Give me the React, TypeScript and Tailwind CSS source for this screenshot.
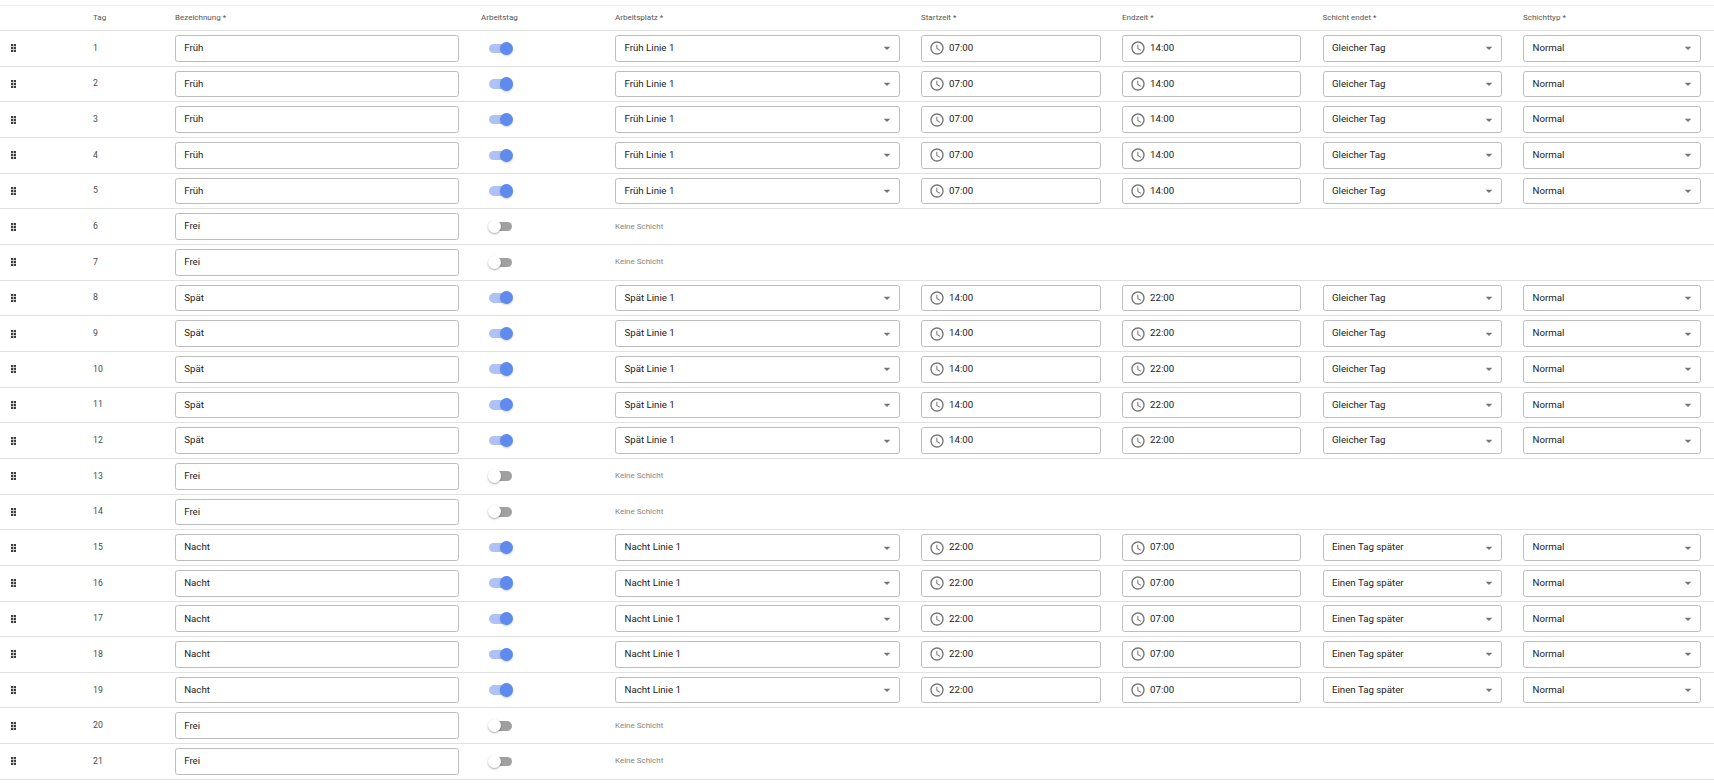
const grid = "grid grid-cols-[93px_82px_306px_134px_306px_201px_200.5px_200.5px_1fr]";

type Row = { name: string; place?: string; start?: string; end?: string; ends?: string };

const early: Row = { name: "Früh", place: "Früh Linie 1", start: "07:00", end: "14:00", ends: "Gleicher Tag" };
const late: Row = { name: "Spät", place: "Spät Linie 1", start: "14:00", end: "22:00", ends: "Gleicher Tag" };
const night: Row = { name: "Nacht", place: "Nacht Linie 1", start: "22:00", end: "07:00", ends: "Einen Tag später" };
const free: Row = { name: "Frei" };

const rows: Row[] = [
  early, early, early, early, early, free, free,
  late, late, late, late, late, free, free,
  night, night, night, night, night, free, free,
];

function DragDots() {
  return (
    <svg width="5" height="8" viewBox="0 0 5 8" className="ml-[11px] text-[#3f3f3f]" fill="currentColor">
      <rect x="0" y="0" width="2.2" height="2.2" />
      <rect x="2.8" y="0" width="2.2" height="2.2" />
      <rect x="0" y="2.9" width="2.2" height="2.2" />
      <rect x="2.8" y="2.9" width="2.2" height="2.2" />
      <rect x="0" y="5.8" width="2.2" height="2.2" />
      <rect x="2.8" y="5.8" width="2.2" height="2.2" />
    </svg>
  );
}

function Clock() {
  return (
    <svg width="16" height="16" viewBox="0 0 24 24" fill="#757575" className="shrink-0">
      <path d="M11.99 2C6.47 2 2 6.48 2 12s4.47 10 9.99 10C17.52 22 22 17.52 22 12S17.52 2 11.99 2zM12 20c-4.42 0-8-3.58-8-8s3.58-8 8-8 8 3.58 8 8-3.58 8-8 8z" />
      <path d="M12.5 7H11v6l5.25 3.15.75-1.23-4.5-2.67z" />
    </svg>
  );
}

function Arrow() {
  return (
    <svg width="16" height="16" viewBox="0 0 24 24" fill="#757575" className="shrink-0">
      <path d="M7 10l5 5 5-5z" />
    </svg>
  );
}

const box = "h-[26.7px] flex items-center rounded-[2.7px] border border-[#bdbdbd] bg-white text-[9.7px] text-[#212121]";

function Select({ value, className }: { value: string; className: string }) {
  return (
    <div className={`${box} ${className} justify-between pl-[8.5px] pr-[4px]`}>
      <span>{value}</span>
      <Arrow />
    </div>
  );
}

function Time({ value, className }: { value: string; className: string }) {
  return (
    <div className={`${box} ${className} gap-[4px] pl-[7px]`}>
      <Clock />
      <span>{value}</span>
    </div>
  );
}

function Toggle({ on }: { on: boolean }) {
  return (
    <div className="ml-[8px] flex h-[14px] w-[24px] items-center">
      <div className={`relative h-[9.5px] w-[22.7px] rounded-full ${on ? "bg-[#aec2f6]" : "bg-[#a0a0a0]"}`}>
        <div
          className={
            on
              ? "absolute right-[-1.5px] top-[-2px] h-[13.3px] w-[13.3px] rounded-full bg-[#5f8bef] shadow-[0_1px_2px_rgba(0,0,0,0.2)]"
              : "absolute left-[-1.5px] top-[-2px] h-[13.3px] w-[13.3px] rounded-full bg-white shadow-[0_1px_2px_rgba(0,0,0,0.35)]"
          }
        />
      </div>
    </div>
  );
}

const heads = ["", "Tag", "Bezeichnung *", "Arbeitstag", "Arbeitsplatz *", "Startzeit *", "Endzeit *", "Schicht endet *", "Schichttyp *"];

export default function App() {
  return (
    <div className="h-[783px] w-full overflow-hidden bg-white pt-[5px] font-['Roboto',sans-serif]">
      <div className={`${grid} h-[26px] items-center border-y border-t-[#eeeeee] border-b-[#e0e0e0] text-[8px] text-[#555555]`}>
        {heads.map((h, i) => (
          <div key={i}>{h}</div>
        ))}
      </div>
      {rows.map((r, i) => (
        <div key={i} className={`${grid} h-[35.67px] items-center border-b border-[#e0e0e0]`}>
          <DragDots />
          <div className="text-[8.7px] text-[#4a4a4a]">{i + 1}</div>
          <div className={`${box} w-[284px] pl-[8.2px] pr-[8px]`}>{r.name}</div>
          <Toggle on={!!r.place} />
          {r.place ? (
            <>
              <Select value={r.place} className="w-[285px]" />
              <Time value={r.start!} className="w-[180px]" />
              <Time value={r.end!} className="w-[179px]" />
              <Select value={r.ends!} className="w-[179px]" />
              <Select value="Normal" className="w-[178px]" />
            </>
          ) : (
            <div className="col-span-5 text-[8px] text-[#858585]">Keine Schicht</div>
          )}
        </div>
      ))}
    </div>
  );
}
